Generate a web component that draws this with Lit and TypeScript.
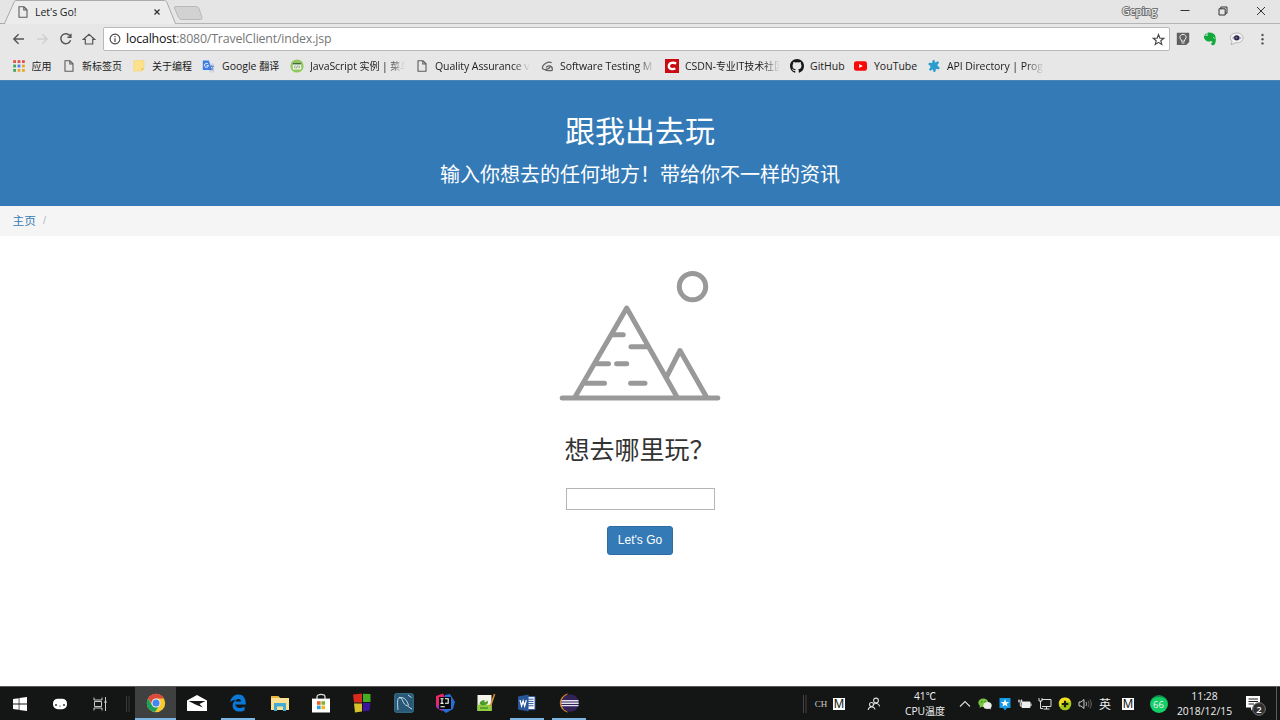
import { LitElement, html, css, svg } from "lit";
import { customElement } from "lit/decorators.js";

const icon = (w: number, h: number, body: unknown) =>
  html`<svg width=${w} height=${h} viewBox="0 0 ${w} ${h}" fill="none">${body}</svg>`;

const page = () => icon(12, 14, svg`<path d="M2 1.8H7L10 4.8V12.2H2Z M6.8 2V5H10" stroke="#5c5c5c" stroke-width="1.1"/>`);

const apps = icon(12, 12, svg`${[0, 1, 2].map((r) => [0, 1, 2].map((c) => svg`<rect x=${0.2 + c * 4.4} y=${0.2 + r * 4.4} width="2.8" height="2.8" fill=${[["#df5149", "#df5149", "#df5149"], ["#45a65c", "#4a86e0", "#e8a62e"], ["#45a65c", "#e8a62e", "#e8a62e"]][r][c]}/>`))}`);
const folder = icon(12, 12, svg`<path d="M.8.6H11V8.3L8.6 11H.8Z" fill="#fde28b" stroke="#f5d36c" stroke-width=".6"/><path d="M11 8.2H8.6V11Z" fill="#e8bd48"/>`);
const translate = icon(13, 13, svg`<path d="M5 3.5H12.3V12.4H7.6Z" fill="#d3d7de"/><path d="M.8.5H7L9.5 10H.8Z" fill="#3f7ce6"/><path d="M6.2 4.2A2 2 0 1 0 6.5 5.7H4.6" stroke="#fff" stroke-width="1"/><path d="M7.6 6.3H11.8M9.7 5.3V6.3M11 6.4C10.6 8.2 9.6 9.4 8.4 10M8.6 7.7C9.2 9 10.2 9.7 11.4 10.2" stroke="#3f6ec0" stroke-width=".8"/>`);
const runoob = icon(14, 14, svg`<circle cx="7" cy="7" r="6.6" fill="#8fc95b"/><rect x="2.8" y="3.8" width="8.4" height="6.7" rx=".6" fill="#eef5e8"/><path d="M2.8 3.8H11.2V5.4H2.8Z" fill="#476a36"/><path d="M5.4 6.6L4.4 7.9L5.4 9.2M8.6 6.6L9.6 7.9L8.6 9.2M7.5 6.5L6.5 9.3" stroke="#55704a" stroke-width=".7"/>`);
const guru = icon(13, 12, svg`<path d="M10.6 2.8C7.5.5 1.2 4.6 1.4 7.9C1.6 10.6 8.4 9.8 9.5 6.1C7.8 5.5 5.6 6.4 5.2 7.4M9.4 6.1C10.8 6.6 11.7 7.9 11.2 10.3C7.7 11 5.2 10.6 3.6 9.5" stroke="#626262" stroke-width="1.25"/>`);
const csdn = icon(14, 14, svg`<path d="M0 0H14V14H0Z" fill="#c90c14"/><path d="M11.2 4.3C8.5 3.3 4 3.4 3.8 7C3.7 10.2 7.6 10.5 10.4 9.5" stroke="#fff" stroke-width="2.3"/>`);
const github = html`<svg width="14" height="14" viewBox="0 0 16 16"><path fill="#171717" d="M8 0C3.58 0 0 3.58 0 8c0 3.54 2.29 6.53 5.47 7.59.4.07.55-.17.55-.38 0-.19-.01-.82-.01-1.49-2.01.37-2.53-.49-2.69-.94-.09-.23-.48-.94-.82-1.13-.28-.15-.68-.52-.01-.53.63-.01 1.08.58 1.23.82.72 1.21 1.87.87 2.33.66.07-.52.28-.87.51-1.07-1.78-.2-3.64-.89-3.64-3.95 0-.87.31-1.59.82-2.15-.08-.2-.36-1.02.08-2.12 0 0 .67-.21 2.2.82a7.4 7.4 0 0 1 4 0c1.53-1.04 2.2-.82 2.2-.82.44 1.1.16 1.92.08 2.12.51.56.82 1.27.82 2.15 0 3.07-1.87 3.75-3.65 3.95.29.25.54.73.54 1.48 0 1.07-.01 1.93-.01 2.2 0 .21.15.46.55.38A8 8 0 0 0 16 8c0-4.42-3.58-8-8-8Z"/></svg>`;
const youtube = icon(13, 10, svg`<rect y=".3" width="13" height="9.4" rx="2.2" fill="#fa0808"/><path d="M5.2 2.9V7.1L8.8 5Z" fill="#fff"/>`);
const apiPuzzle = icon(14, 14, svg`<g stroke="#2b9cce" stroke-width="2.6" stroke-linecap="round"><path d="M6.6 2.4L7.4 11.6M2.7 5L11.3 9M3.4 10.4L10.6 3.6"/></g><circle cx="7" cy="7" r="3.7" fill="#2b9cce"/>`);

interface Mark { icon: unknown; w: number; latin?: string; cjk?: string; tail?: string; rest?: string; fade?: boolean; gap: number }
const marks: Mark[] = [
  { icon: apps, gap: 7, cjk: "应用", w: 30 },
  { icon: page(), gap: 7, cjk: "新标签页", w: 51 },
  { icon: folder, gap: 7, cjk: "关于编程", w: 50 },
  { icon: translate, gap: 7, latin: "Google ", cjk: "翻译", w: 66 },
  { icon: runoob, gap: 6, latin: "JavaScript ", cjk: "实例", tail: " | ", rest: "菜鸟", w: 95, fade: true },
  { icon: page(), gap: 7, latin: "Quality Assurance v", w: 95, fade: true },
  { icon: guru, gap: 6, latin: "Software Testing M", w: 95, fade: true },
  { icon: csdn, gap: 6, latin: "CSDN-", cjk: "专业", tail: "IT", rest: "技术社区", w: 95, fade: true },
  { icon: github, gap: 6, latin: "GitHub", w: 35 },
  { icon: youtube, gap: 7, latin: "YouTube", w: 43 },
  { icon: apiPuzzle, gap: 6, latin: "API Directory | Prog", w: 97, fade: true },
];

const mBadge = html`<span class="m">M</span>`;

const tasks: { body: unknown; cls?: string }[] = [
  { cls: "hot run", body: icon(20, 20, svg`<circle cx="10" cy="10" r="9.2" fill="#fbc92f"/><path d="M2 5.4A9.2 9.2 0 0 1 18 5.4H10L7 12Z" fill="#dc4a3d"/><path d="M2 5.4A9.2 9.2 0 0 0 9 19.1L13.5 12L6 12Z" fill="#1da05b"/><circle cx="10" cy="10" r="4.5" fill="#eee"/><circle cx="10" cy="10" r="3.5" fill="#4585ee"/>`) },
  { body: icon(22, 18, svg`<path d="M1 6.5L11 1L21 6.5V17H1Z" fill="#fff"/><path d="M2.5 7H19.5L13.5 10L17 13.5L10.5 11Z" fill="#171717"/>`) },
  { cls: "run", body: icon(18, 18, svg`<path d="M1.2 8.2C2 3 5.5.5 9.4.5C14.2.5 17 4 16.8 10.4H6.3C6.8 14.2 11.7 14.9 15.6 12.8V16.4C9.7 19.2 3.6 17 3.6 11.7C3.6 9 5 7 7.1 5.7C4.7 5.8 2.5 6.5 1.2 8.2ZM6.6 7.5H12C11.8 4.2 7.3 4.2 6.6 7.5Z" fill="#0b78d5"/>`) },
  { body: icon(20, 18, svg`<path d="M1 2H8L10 4H19V16H1Z" fill="#fbe193"/><path d="M1 2H8L10 4H1Z" fill="#e9b740"/><path d="M4 17V9H16V17H13V12.5H7V17Z" fill="#42acd5"/>`) },
  { body: icon(20, 20, svg`<path d="M6 6V4C6 .5 14 .5 14 4V6" stroke="#ddd" stroke-width="1.3"/><path d="M1 5.6H19V19.5H1Z" fill="#fff"/><path d="M6 8.2H9.6V11.8H6Z" fill="#f0592b"/><path d="M10.4 8.2H14V11.8H10.4Z" fill="#7bb928"/><path d="M6 12.6H9.6V16.2H6Z" fill="#25a2df"/><path d="M10.4 12.6H14V16.2H10.4Z" fill="#f8b91f"/>`) },
  { body: icon(20, 20, svg`<path d="M1 1.5L10 .5V9.5H2Z" fill="#d92b1c"/><path d="M11 .8L18.5 1V9H11Z" fill="#46ad22"/><path d="M2 10.5H10V18.5L3 19.5Z" fill="#d4c429"/><path d="M11 10H18.5L17.5 17.5L11 18.5Z" fill="#3c149e"/>`) },
  { body: icon(20, 20, svg`<rect x=".7" y=".7" width="18.6" height="18.6" rx="1.5" fill="#285876" stroke="#397795"/><path d="M4 17C3.5 12 3 6 5 4.5C8 2.5 9.2 13 13 12.5C16 14.8 16.5 15.5 18 16M5 5C10 3 13.5 8 14.5 12.5M14 2L17.5 4.5" stroke="#c8dfea" stroke-width="1"/>`) },
  { body: icon(20, 20, svg`<path d="M1 3L8 .5L12 9L7 18L1 14Z" fill="#e92867"/><path d="M10 2L15 1L20 9L18 16L11 20L6 16Z" fill="#286ed5"/><path d="M1 12L5 12L9 18L3 16Z" fill="#913bc1"/><rect x="4" y="4" width="12" height="12" fill="#08080a"/><path d="M5.5 5.8H8.5M7 5.8V10.4M5.5 10.4H8.5M10 5.8H13.2V10.3H10M5.5 13.7H9.8" stroke="#fff" stroke-width="1.1"/>`) },
  { body: icon(20, 20, svg`<path d="M1.5 2H15.5V18H1.5Z" fill="#f3f5ec"/><path d="M1.5 12C6 10.5 11 13 15.5 11V18H1.5Z" fill="#8fce3c"/><path d="M3.5 10.5C4 7 10 5.5 12 8.5C12.5 11.5 8.5 12.8 5 12Z" fill="#4e992c"/><circle cx="9.5" cy="8" r="1.3" fill="#d9ecbd"/><path d="M4 15H12" stroke="#347522"/><path d="M18.6 1L14.5 13" stroke="#d29131" stroke-width="1.6"/>`) },
  { cls: "run", body: icon(20, 18, svg`<path d="M9 2.6H18V15.6H9Z" fill="#fff" stroke="#2c5aa0"/><path d="M11 5.2H16.5M11 7.4H16.5M11 9.6H16.5M11 11.8H16.5" stroke="#2b579a" stroke-width="1"/><path d="M1 2.5L11.5.5V17.5L1 15.5Z" fill="#285699"/><path d="M3 6.2L4.6 12L6.1 7L7.7 12L9.3 6.2" stroke="#fff" stroke-width="1.3"/>`) },
  { cls: "run", body: icon(22, 20, svg`<path d="M9.5 1A9.2 9.2 0 0 0 9.5 19A10.5 10.5 0 0 1 9.5 1Z" fill="#ef9631" stroke="#ef9631" stroke-width=".6"/><circle cx="12" cy="10" r="8.8" fill="#322257"/><path d="M3.5 7.8H20.5M3.3 10.2H20.7M3.5 12.6H20.5" stroke="#e4e0ee" stroke-width="1.4"/>`) },
];

@customElement("app-root")
export class AppRoot extends LitElement {
  static styles = css`
    :host { display: block; width: 1280px; height: 720px; overflow: hidden; background: #fff; font-family: "Open Sans", "Noto Sans CJK SC", sans-serif; color: #222; }
    * { box-sizing: border-box; }
    svg { display: block; flex: none; }
    .shell { display: grid; grid-template-rows: 80px 126px 30px 450px 34px; height: 720px; }
    .browser { background: #e7e7e7; display: grid; grid-template-rows: 24px 30px 26px; }
    .tabs { display: flex; background: linear-gradient(#e4e4e4, #e6e6e6); border-bottom: 1px solid #b5b5b5; }
    .tab { display: grid; width: 206px; height: 24px; }
    .tab > * { grid-area: 1 / 1; }
    .tab-content { display: flex; align-items: center; padding-left: 17px; height: 24px; }
    .tab-title { font-size: 10.6px; width: 124px; padding-left: 6px; white-space: pre; letter-spacing: -.1px; }
    .window { margin-left: auto; display: flex; align-items: center; height: 22px; }
    .user { width: 49px; font-size: 10.6px; color: #fff; -webkit-text-stroke: 2px #727272; paint-order: stroke fill; text-align: center; }
    .win-icons { width: 116px; display: flex; justify-content: space-between; padding: 0 14px 0 16px; align-items: center; }
    .toolbar { display: flex; align-items: center; }
    .nav { display: flex; align-items: center; gap: 9.4px; width: 103px; padding-left: 12px; }
    .address { width: 1067px; height: 24px; border: 1px solid #b9b9b9; border-radius: 2px; background: #fff; display: flex; align-items: center; padding: 0 4px 0 5px; }
    .url { flex: 1; font-size: 12.4px; padding-left: 5px; line-height: 22px; color: #777; letter-spacing: -.19px; }
    .url b { font-weight: 400; color: #111; }
    .extensions { display: flex; align-items: center; gap: 12.5px; padding-left: 6px; }
    .bookmarks { display: grid; grid-template-columns: 63px 70px 69px 88px 126px 125px 124px 125px 64px 73px 130px; align-items: center; padding-bottom: 2px; }
    .mark { display: flex; align-items: center; height: 24px; font-size: 10.5px; white-space: pre; line-height: 24px; }
    .mark:first-child { padding-left: 12.5px; }
    .label { overflow: hidden; flex: none; }
    .cjk { font-family: "Noto Sans CJK SC", sans-serif; font-size: 10px; }
    .fade { mask-image: linear-gradient(90deg, #000 82%, transparent); letter-spacing: -.08px; }
    .hero { background: #337ab7; color: #fff; text-align: center; padding-top: 26px; border-top: 1px solid #4b83b4; font-family: "Noto Sans CJK SC", sans-serif; }
    .hero h1 { margin: 0; font-size: 30px; line-height: 44px; font-weight: 400; }
    .hero p { margin: 8px 0 0; font-size: 20px; line-height: 30px; font-weight: 400; }
    .crumb { background: #f5f5f5; display: flex; align-items: center; padding: 0 0 3px 12.5px; font: 11.7px/27px "Noto Sans CJK SC", sans-serif; color: #337ab7; gap: 7px; }
    .crumb i { font: 11px "Liberation Sans", sans-serif; color: #bbb; }
    .main { display: flex; flex-direction: column; align-items: center; padding-top: 24px; }
    .prompt { margin: 18px 0 0; font: 400 25px/40px "Noto Sans CJK SC", sans-serif; color: #333; height: 40px; width: 151px; white-space: nowrap; }
    .field { margin-top: 20px; width: 149px; height: 22px; border: 1px solid #b5b5b5; background: #fff; padding: 0; border-radius: 0; }
    .go { margin-top: 16px; width: 66px; height: 29px; border: 1px solid #2e6da4; border-radius: 3px; background: #337ab7; color: #fff; font: 12px "Liberation Sans", sans-serif; padding: 0 0 2px; }
    .taskbar { display: flex; background: #141515; border-top: 1px solid #595a5a; color: #eee; }
    .sys { width: 40px; display: grid; place-items: center; }
    .sep { width: 15.2px; display: flex; justify-content: center; align-items: center; }
    .task { width: 41.3px; display: grid; place-items: center; border-bottom: 2px solid transparent; }
    .run { border-bottom-color: #7bb6e4; }
    .run:not(.hot) { width: 34px; margin: 0 3.65px; }
    .hot { background: #3f4040; }
    .tray { margin-left: auto; display: grid; grid-template-rows: 33px; grid-template-columns: 10px 22px 14px 56px 46px 27px repeat(7, 20px) 26px 35px 57px 43px 4px; }
    .tray > * { display: grid; place-items: center; align-content: center; }
    .tray > .caret { padding-left: 7px; }
    .tray > .notes { padding-left: 3px; }
    .m { width: 12px; height: 12px; background: #fff; color: #111; font: 12.5px/12.5px "Liberation Sans", sans-serif; text-align: center; }
    .ch { font: 9px "Liberation Serif", serif; color: #ccc; }
    .temp, .clock { font-size: 10.3px; line-height: 14.6px; text-align: center; white-space: nowrap; }
    .clock { font-size: 10.4px; }
    .line { display: block; height: 14.6px; }
    .ime { font: 12px/17px "Noto Sans CJK SC", sans-serif; }
    .score { width: 18px; height: 18px; border-radius: 50%; background: #14ce68; border-top: 2px solid #118c49; display: grid; place-items: center; font-size: 9.5px; line-height: 14px; }
    .edge { border-left: 1px solid #5b5c5c; }
    .n2 { font-size: 9.5px; fill: #fff; font-family: "Open Sans", sans-serif; font-weight: 600; }
  `;

  private chrome() {
    return html`<header class="browser">
      <div class="tabs">
        <div class="tab">
          ${icon(206, 24, svg`<path d="M0 23.5H4.5L14.5 1.2Q15 .5 16 .5H164.5Q166 .5 166.5 1.5L175.5 23.5" fill="#ececec" stroke="#aaa"/><path d="M5 24L6 23H175V24Z" fill="#ececec"/><path d="M175 6.5H196Q198 6.5 199 8.5L202 17.5Q202.5 19.5 200.5 19.5H182Q179.5 19.5 178.5 17.5L174.5 8Q174 6.5 176 6.5Z" fill="#d2d2d2" stroke="#b8b8b8"/>`)}
          <div class="tab-content">${page()}<span class="tab-title">Let's Go!</span>${icon(8, 8, svg`<path d="M1.5 1.5L6.5 6.5M6.5 1.5L1.5 6.5" stroke="#333" stroke-width="1.3"/>`)}</div>
        </div>
        <div class="window"><span class="user">Geping</span><span class="win-icons">
          ${icon(10, 10, svg`<path d="M.5 4.5H9.5" stroke="#333"/>`)}
          ${icon(10, 10, svg`<path d="M1 2.8H7.2V9H1ZM2.8 2.8V1H9V7.2H7.2" stroke="#333"/>`)}
          ${icon(10, 10, svg`<path d="M1 1L9 9M9 1L1 9" stroke="#333"/>`)}
        </span></div>
      </div>
      <div class="toolbar">
        <div class="nav">
          ${icon(14, 14, svg`<path d="M12 7H2M6.6 2.2L1.8 7L6.6 11.8" stroke="#555" stroke-width="1.4"/>`)}
          ${icon(14, 14, svg`<path d="M2 7H12M7.4 2.2L12.2 7L7.4 11.8" stroke="#d0d0d0" stroke-width="1.4"/>`)}
          ${icon(14, 14, svg`<path d="M11.2 4.2A5 5 0 1 0 11.6 8.3M11.9 1.8V5.2H8.4" stroke="#555" stroke-width="1.4"/>`)}
          ${icon(14, 14, svg`<path d="M1.5 7.3L7 2.2L12.5 7.3H10.7V12H3.3V7.3Z" stroke="#555" stroke-width="1.2"/>`)}
        </div>
        <div class="address">
          ${icon(12, 12, svg`<circle cx="6" cy="6" r="4.9" stroke="#444" stroke-width="1.1"/><path d="M6 5.2V9M6 3V4.3" stroke="#444" stroke-width="1.2"/>`)}
          <span class="url"><b>localhost</b>:8080/TravelClient/index.jsp</span>
          ${icon(13, 13, svg`<path d="M6.5 1.5L7.9 5.1L11.8 5.3L8.8 7.7L9.8 11.5L6.5 9.4L3.2 11.5L4.2 7.7L1.2 5.3L5.1 5.1Z" stroke="#444" stroke-width="1.1"/>`)}
        </div>
        <div class="extensions">
          ${icon(14, 14, svg`<path d="M.8.8H13.2V10L10.2 13H.8Z" fill="#606060"/><path d="M5.4 8C2.6 5.3 4 2.5 7 2.5S11.4 5.3 8.6 8V9.2H5.4ZM5.5 11H8.5" stroke="#eee"/>`)}
          ${icon(14, 14, svg`<path d="M4.5.8C8 0 10.5 1.2 12 3.2C13.5 7 13 13.2 10 13.2C7.5 13.2 7.6 10 10 10.2C8.6 8.7 7.5 9.5 6.5 9.5C3 9.7.5 7 1 4H4.5Z" fill="#13a83b"/><path d="M3.5 1L1 3.4H3.5Z" fill="#13a83b"/><path d="M10 5.7C11 5.3 11.6 5.8 11.6 6.5" stroke="#d8eedc" stroke-width=".8"/>`)}
          ${icon(15, 14, svg`<path d="M7.5 1C12 1 14 3.6 14 6.2C14 9.2 10.8 11 7 10.7L2 12.7L3 9.5C-.5 6.2 1.5 1 7.5 1Z" fill="#f3f3f5" stroke="#aaa" stroke-width=".8"/><path d="M3 6C5 2.6 10 2.6 12.5 6C10 8.8 5.5 8.8 3 6Z" fill="#aaa9bd"/><circle cx="7.7" cy="5.8" r="2.6" fill="#252650"/><circle cx="7.4" cy="5.8" r="1" fill="#966c72"/>`)}
          ${icon(12, 14, svg`<g fill="#555"><circle cx="5.5" cy="3" r="1.2"/><circle cx="5.5" cy="7.2" r="1.2"/><circle cx="5.5" cy="11.4" r="1.2"/></g>`)}
        </div>
      </div>
      <nav class="bookmarks">${marks.map((m) => html`<span class="mark">${m.icon}<span class="label ${m.fade ? "fade" : ""}" style="width:${m.w}px;margin-left:${m.gap}px">${m.latin}${m.cjk ? html`<span class="cjk">${m.cjk}</span>` : ""}${m.tail}${m.rest ? html`<span class="cjk">${m.rest}</span>` : ""}</span></span>`)}</nav>
    </header>`;
  }

  private tray() {
    return html`<div class="tray">
      <span>${icon(4, 18, svg`<path d="M.5 0V18M3 0V18" stroke="#444"/>`)}</span>
      <span class="ch">CH</span>
      <span>${mBadge}</span>
      <span>${icon(14, 14, svg`<g stroke="#ddd" stroke-width="1.1"><circle cx="9" cy="3.5" r="2.4"/><path d="M6.5 7.5C8 5.8 12 6 12.7 9.5"/><circle cx="4.5" cy="7.5" r="2"/><path d="M1.2 13C1.5 9 7.5 9 8 12.5"/></g>`)}</span>
      <span class="temp"><span class="line">41℃</span><span class="line">CPU<span class="cjk">温度</span></span></span>
      <span class="caret">${icon(12, 12, svg`<path d="M1 8.5L6 3.5L11 8.5" stroke="#ddd" stroke-width="1.1"/>`)}</span>
      <span>${icon(14, 12, svg`<ellipse cx="5.3" cy="4.7" rx="5" ry="4.2" fill="#77c53f"/><path d="M2 7L1.5 10L4.5 8Z" fill="#77c53f"/><ellipse cx="9.5" cy="7.5" rx="4.2" ry="3.6" fill="#e8eee5"/><path d="M11 10L12.5 11.7L12.6 9Z" fill="#e8eee5"/><circle cx="3.7" cy="3.8" r=".6" fill="#244a16"/><circle cx="7" cy="3.8" r=".6" fill="#244a16"/>`)}</span>
      <span>${icon(12, 14, svg`<path d="M.5 1H11.5V11H8L6 13.5L4 11H.5Z" fill="#159ce8"/><path d="M6 2L7.1 4.9L10.2 5L7.8 6.9L8.6 9.8L6 8.1L3.4 9.8L4.2 6.9L1.8 5L4.9 4.9Z" fill="#fff"/>`)}</span>
      <span>${icon(14, 12, svg`<path d="M4 4H12V9.5H4Z" fill="#eee" stroke="#eee"/><path d="M12.5 5.5H13.5V8H12.5Z" fill="#eee"/><path d="M1 1.5V4.5M3.5 1.5V4.5M0 3H4.5M2.3 4V8H4" stroke="#ddd"/>`)}</span>
      <span>${icon(14, 13, svg`<path d="M4 2.5H13V9.5H4M8.5 9.5V12M5.5 12H11.5M1 1V4H4V1M2.5 4V11.5H5" stroke="#ddd"/>`)}</span>
      <span>${icon(14, 14, svg`<circle cx="7" cy="7" r="6.3" fill="#a5c51b"/><path d="M1 5A6.3 6.3 0 0 1 13 5C8 3 5 7 2 10Z" fill="#f2df20"/><path d="M7 3.7V10.3M3.7 7H10.3" stroke="#161f10" stroke-width="2.2"/>`)}</span>
      <span>${icon(14, 12, svg`<path d="M1 4H3L6 1.5V10.5L3 8H1Z" stroke="#ccc"/><path d="M8 4Q9.5 6 8 8" stroke="#aaa"/><path d="M10 2.7Q12.4 6 10 9.3M12 1.5Q15 6 12 10.5" stroke="#666"/>`)}</span>
      <span class="ime">英</span>
      <span>${mBadge}</span>
      <span><span class="score">66</span></span>
      <span class="clock"><span class="line">11:28</span><span class="line">2018/12/15</span></span>
      <span class="notes">${icon(22, 24, svg`<path d="M1 4H15V15.5H9L6 18.5V15.5H1Z" fill="#fff"/><path d="M3.5 7H13M3.5 9.5H13M3.5 12H9" stroke="#222"/><circle cx="14" cy="17" r="6.3" fill="#303030" stroke="#747474"/><text class="n2" x="11.3" y="20.5">2</text>`)}</span>
      <span class="edge"></span>
    </div>`;
  }

  render() {
    return html`<div class="shell">
      ${this.chrome()}
      <section class="hero"><h1>跟我出去玩</h1><p>输入你想去的任何地方！带给你不一样的资讯</p></section>
      <div class="crumb"><span>主页</span><i>/</i></div>
      <main class="main">
        ${icon(170, 150, svg`<g stroke="#999" stroke-width="5" stroke-linecap="round" stroke-linejoin="round"><circle cx="137.5" cy="26.6" r="13.2"/><path d="M7.2 138H162.8M20 137L71.7 48L122 137M111.5 117L125 90.5L151.5 137M57 74.8H68.2M76 86.8H92M42 103.7H53.5M61.6 103.7H71.7M31 123.2H49.5M75.6 123.2H90"/></g>`)}
        <h2 class="prompt">想去哪里玩？</h2>
        <input class="field" aria-label="目的地">
        <button class="go">Let's Go</button>
      </main>
      <footer class="taskbar">
        <span class="sys">${icon(16, 14, svg`<path d="M1 2L6.7 1.2V6.6H1ZM7.4 1.1L15 0V6.6H7.4ZM1 7.4H6.7V12.8L1 12ZM7.4 7.4H15V14L7.4 12.9Z" fill="#fff"/>`)}</span>
        <span class="sys">${icon(14, 12, svg`<rect y=".7" width="14" height="10.5" rx="4.8" fill="#fff"/><circle cx="3" cy="7" r=".9" fill="#222"/><circle cx="11" cy="7" r=".9" fill="#222"/><path d="M6.3 8Q7 8.7 7.7 8" stroke="#222" stroke-width=".7"/>`)}</span>
        <span class="sys">${icon(14, 14, svg`<path d="M1 .5V3H9V.5M1 13.5V11H9V13.5M1.5 4.5H8.5V9.5H1.5ZM12.5 0V14M11 5H14" stroke="#c8c8c8"/>`)}</span>
        <span class="sep">${icon(4, 16, svg`<path d="M.5 0V16M3 0V16" stroke="#444" stroke-width=".8"/>`)}</span>
        ${tasks.map((t) => html`<span class="task ${t.cls ?? ""}">${t.body}</span>`)}
        ${this.tray()}
      </footer>
    </div>`;
  }
}
